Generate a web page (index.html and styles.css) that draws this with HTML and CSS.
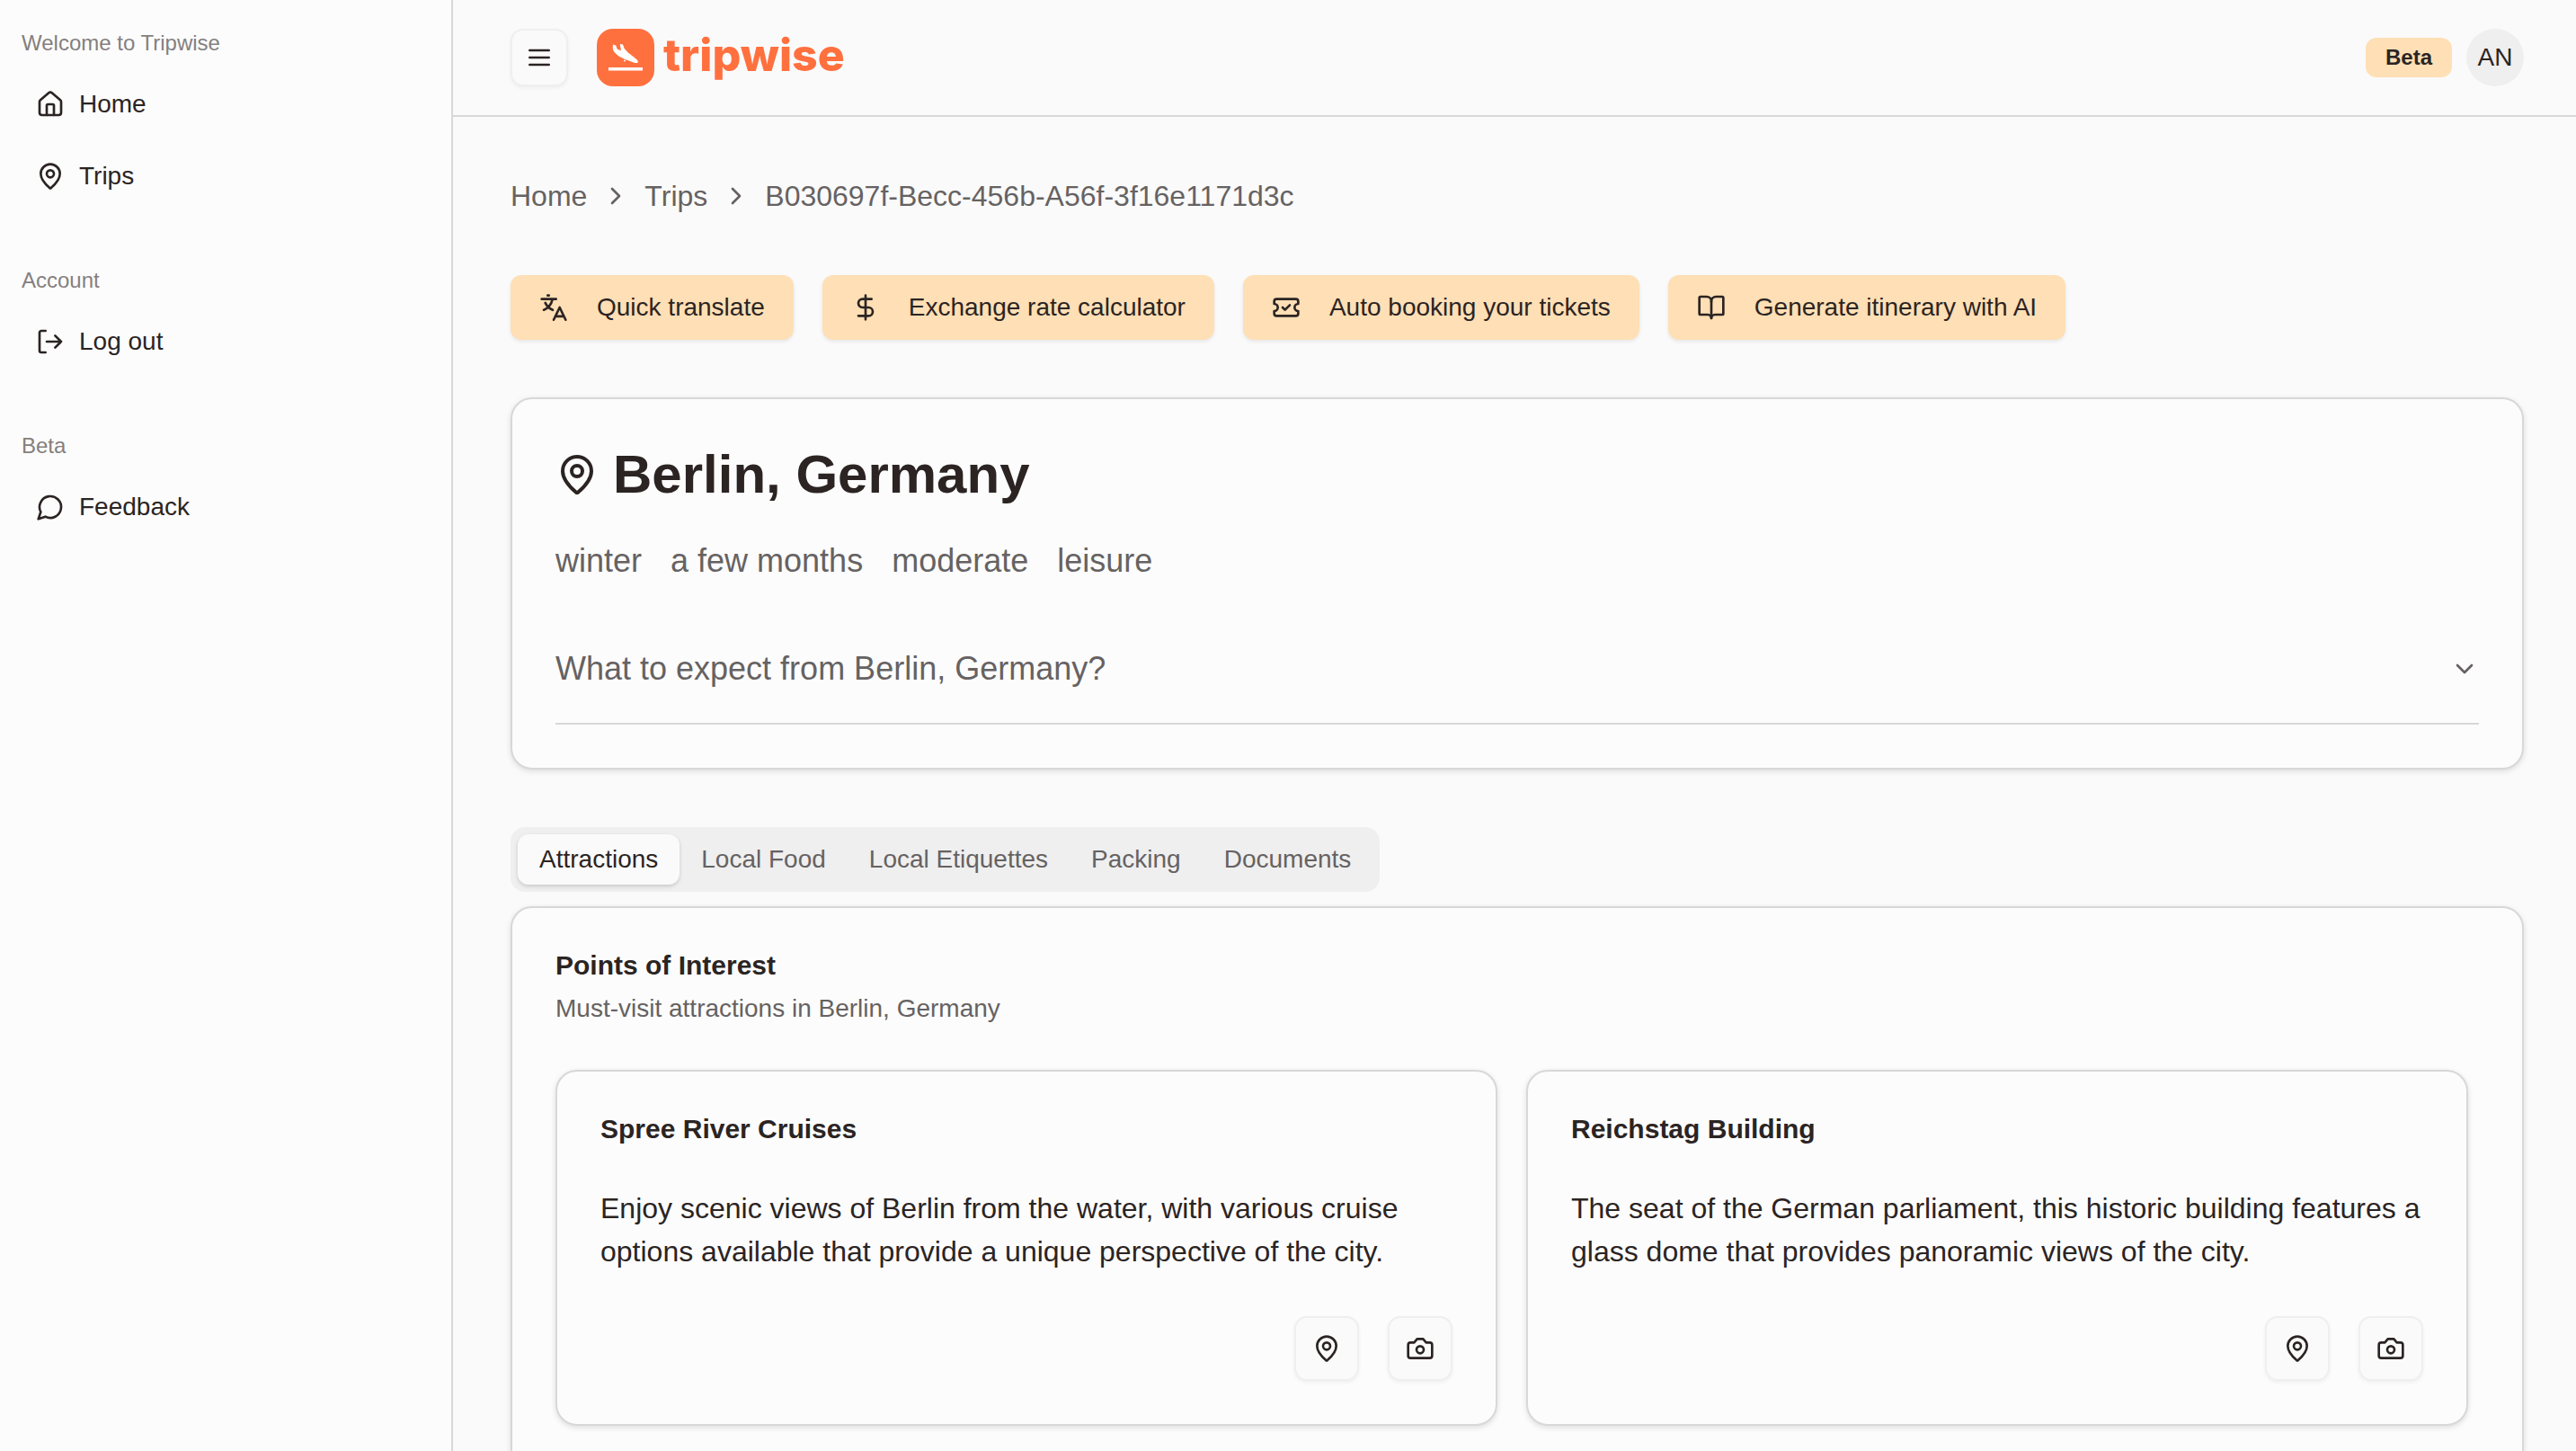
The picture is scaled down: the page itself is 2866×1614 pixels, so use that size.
FILE: index.html
```html
<!DOCTYPE html>
<html lang="en">
<head>
<meta charset="utf-8">
<meta name="viewport" content="width=device-width, initial-scale=1">
<title>Berlin, Germany - tripwise</title>
<link rel="stylesheet" href="styles.css">
</head>
<body>
<svg class="sprite" aria-hidden="true">
  <symbol id="i-home" viewBox="0 0 24 24"><path d="M15 21v-8a1 1 0 0 0-1-1h-4a1 1 0 0 0-1 1v8"/><path d="M3 10a2 2 0 0 1 .709-1.528l7-5.999a2 2 0 0 1 2.582 0l7 5.999A2 2 0 0 1 21 10v9a2 2 0 0 1-2 2H5a2 2 0 0 1-2-2z"/></symbol>
  <symbol id="i-pin" viewBox="0 0 24 24"><path d="M20 10c0 4.993-5.539 10.193-7.399 11.799a1 1 0 0 1-1.202 0C9.539 20.193 4 14.993 4 10a8 8 0 0 1 16 0"/><circle cx="12" cy="10" r="3"/></symbol>
  <symbol id="i-exit" viewBox="0 0 24 24"><path d="M8 21H4.500a1.500 1.500 0 0 1-1.500-1.500v-15A1.500 1.500 0 0 1 4.500 3H8"/><path d="M16 17l5-5-5-5M21 12H9"/></symbol>
  <symbol id="i-chat" viewBox="0 0 24 24"><path d="M7.900 20A9 9 0 1 0 4 16.100L2 22Z"/></symbol>
  <symbol id="i-menu" viewBox="0 0 24 24"><path d="M4 6h16M4 12h16M4 18h16"/></symbol>
  <symbol id="i-right" viewBox="0 0 24 24"><path d="m9 18 6-6-6-6"/></symbol>
  <symbol id="i-down" viewBox="0 0 24 24"><path d="m6 9 6 6 6-6"/></symbol>
  <symbol id="i-dollar" viewBox="0 0 24 24"><path d="M12 2v20M17 5H9.500a3.500 3.500 0 0 0 0 7h5a3.500 3.500 0 0 1 0 7H6"/></symbol>
  <symbol id="i-ticket" viewBox="0 0 24 24"><path d="M2 9a3 3 0 0 1 0 6v2a2 2 0 0 0 2 2h16a2 2 0 0 0 2-2v-2a3 3 0 0 1 0-6V7a2 2 0 0 0-2-2H4a2 2 0 0 0-2 2Z"/><path d="m9 12 2 2 4-4"/></symbol>
  <symbol id="i-book" viewBox="0 0 24 24"><path d="M12 7v14"/><path d="M3 18a1 1 0 0 1-1-1V4a1 1 0 0 1 1-1h5a4 4 0 0 1 4 4 4 4 0 0 1 4-4h5a1 1 0 0 1 1 1v13a1 1 0 0 1-1 1h-6a3 3 0 0 0-3 3 3 3 0 0 0-3-3z"/></symbol>
  <symbol id="i-camera" viewBox="0 0 24 24"><path d="M14.500 4h-5L7 7H4a2 2 0 0 0-2 2v9a2 2 0 0 0 2 2h16a2 2 0 0 0 2-2V9a2 2 0 0 0-2-2h-3l-2.500-3z"/><circle cx="12" cy="13" r="3"/></symbol>
  <symbol id="i-translate" viewBox="0 0 24 24"><path d="M7 2h1M2 5h12M11 5.200C10 9.500 7.500 12.500 3.800 14M5 8.200c1.200 2.600 3.200 4.600 6.200 5.900M12 22.300l5-10.300 5 10.300M13.400 19.400h7.200"/></symbol>
</svg>

<div class="app">
  <aside class="sidebar">
    <nav class="group" aria-labelledby="g1">
      <h2 class="group-label" id="g1">Welcome to Tripwise</h2>
      <a class="nav-item" href="#"><svg class="icon"><use href="#i-home"/></svg>Home</a>
      <a class="nav-item" href="#"><svg class="icon"><use href="#i-pin"/></svg>Trips</a>
    </nav>
    <nav class="group" aria-labelledby="g2">
      <h2 class="group-label" id="g2">Account</h2>
      <a class="nav-item" href="#"><svg class="icon"><use href="#i-exit"/></svg>Log out</a>
    </nav>
    <nav class="group" aria-labelledby="g3">
      <h2 class="group-label" id="g3">Beta</h2>
      <a class="nav-item" href="#"><svg class="icon"><use href="#i-chat"/></svg>Feedback</a>
    </nav>
  </aside>

  <div class="main">
    <header class="topbar">
      <button class="icon-btn menu-btn" type="button" aria-label="Toggle sidebar"><svg class="icon"><use href="#i-menu"/></svg></button>
      <a class="brand" href="#">
        <svg class="brand-mark" viewBox="0 0 64 64"><rect width="64" height="64" rx="18" fill="#ff703f"/><path fill="#fff" d="M13 43h38v3.500H13zM18 17.500l3.200 1 1.600 4.200 4.200 1.600-1-5.600V17l3 .6 1.800 4.600 4 4.300 5.500 4.300 4.500 3.600c1 1 1.200 2.200.8 3.300-1.600.6-3 .3-4.600-.3L31 33.800l-5.700-2.800c-3-2-5.500-4.400-7-7-.6-2-.6-4.200-.3-6.500z"/><circle cx="31" cy="35.500" r="1" fill="#fff"/></svg>
        <span class="brand-name">tripwise</span>
      </a>
      <span class="badge">Beta</span>
      <button class="avatar" type="button" aria-label="Account AN">AN</button>
    </header>

    <main class="content">
      <nav class="crumbs" aria-label="Breadcrumb">
        <a href="#">Home</a><svg class="icon"><use href="#i-right"/></svg>
        <a href="#">Trips</a><svg class="icon"><use href="#i-right"/></svg>
        <a href="#">B030697f-Becc-456b-A56f-3f16e1171d3c</a>
      </nav>

      <div class="actions">
        <button class="action" type="button"><svg class="icon"><use href="#i-translate"/></svg>Quick translate</button>
        <button class="action" type="button"><svg class="icon"><use href="#i-dollar"/></svg>Exchange rate calculator</button>
        <button class="action" type="button"><svg class="icon"><use href="#i-ticket"/></svg>Auto booking your tickets</button>
        <button class="action" type="button"><svg class="icon"><use href="#i-book"/></svg>Generate itinerary with AI</button>
      </div>

      <section class="card trip">
        <h1 class="trip-title"><svg class="icon icon-lg"><use href="#i-pin"/></svg>Berlin, Germany</h1>
        <ul class="tags"><li>winter</li><li>a few months</li><li>moderate</li><li>leisure</li></ul>
        <button class="accordion" type="button" aria-expanded="false">What to expect from Berlin, Germany?<svg class="icon"><use href="#i-down"/></svg></button>
      </section>

      <div class="tabs" role="tablist">
        <button class="tab active" type="button" role="tab" aria-selected="true">Attractions</button>
        <button class="tab" type="button" role="tab" aria-selected="false">Local Food</button>
        <button class="tab" type="button" role="tab" aria-selected="false">Local Etiquettes</button>
        <button class="tab" type="button" role="tab" aria-selected="false">Packing</button>
        <button class="tab" type="button" role="tab" aria-selected="false">Documents</button>
      </div>

      <section class="card places">
        <h2 class="heading">Points of Interest</h2>
        <p class="sub">Must-visit attractions in Berlin, Germany</p>
        <div class="grid">
          <article class="card place">
            <h3 class="heading">Spree River Cruises</h3>
            <p class="text">Enjoy scenic views of Berlin from the water, with various cruise options available that provide a unique perspective of the city.</p>
            <div class="place-actions">
              <button class="icon-btn" type="button" aria-label="Show on map"><svg class="icon"><use href="#i-pin"/></svg></button>
              <button class="icon-btn" type="button" aria-label="Show photos"><svg class="icon"><use href="#i-camera"/></svg></button>
            </div>
          </article>
          <article class="card place">
            <h3 class="heading">Reichstag Building</h3>
            <p class="text">The seat of the German parliament, this historic building features a glass dome that provides panoramic views of the city.</p>
            <div class="place-actions">
              <button class="icon-btn" type="button" aria-label="Show on map"><svg class="icon"><use href="#i-pin"/></svg></button>
              <button class="icon-btn" type="button" aria-label="Show photos"><svg class="icon"><use href="#i-camera"/></svg></button>
            </div>
          </article>
        </div>
      </section>
    </main>
  </div>
</div>
</body>
</html>
```
FILE: styles.css
```css
:root {
  --bg: #fafafa;
  --surface: #fcfcfc;
  --border: #d8d8d8;
  --soft: #efefef;
  --text: #2b2423;
  --muted: #666262;
  --peach: #ffdfb5;
  --orange: #ff703f;
}

* { box-sizing: border-box; margin: 0; padding: 0; }

html, body { height: 100%; }

body {
  background: var(--bg);
  color: var(--text);
  font: 28px/40px "Liberation Sans", Arial, sans-serif;
}

button { font: inherit; color: inherit; border: 0; background: none; }
a { color: inherit; text-decoration: none; }
ul { list-style: none; }

.sprite { position: absolute; width: 0; height: 0; }

.icon {
  flex: none;
  width: 32px;
  height: 32px;
  fill: none;
  stroke: currentColor;
  stroke-width: 2;
  stroke-linecap: round;
  stroke-linejoin: round;
}
.icon-lg { width: 48px; height: 48px; }

/* The window holds still; the page content scrolls under the top bar */
.app { display: flex; height: 100%; overflow: hidden; }

/* Sidebar */
.sidebar {
  flex: none;
  display: flex;
  flex-direction: column;
  gap: 16px;
  width: 504px;
  background: var(--surface);
  border-right: 2px solid var(--border);
}
.group { display: flex; flex-direction: column; padding: 16px 24px; }
.group-label { font-size: 24px; font-weight: 400; line-height: 64px; color: #857f7e; }
.nav-item { display: flex; align-items: center; gap: 16px; height: 72px; padding: 0 16px; }
.nav-item + .nav-item { margin-top: 8px; }

/* Top bar */
.main { flex: 1; min-width: 0; display: flex; flex-direction: column; }
.topbar {
  flex: none;
  display: flex;
  align-items: center;
  gap: 16px;
  height: 130px;
  padding: 0 58px 0 64px;
  border-bottom: 2px solid var(--border);
}
.icon-btn {
  display: flex;
  align-items: center;
  justify-content: center;
  width: 72px;
  height: 72px;
  background: var(--bg);
  border: 2px solid var(--soft);
  border-radius: 14px;
  box-shadow: 0 2px 4px rgb(0 0 0 / 5%);
}
.menu-btn { width: 64px; height: 64px; }
.brand { display: flex; gap: 10px; margin: 0 auto 0 16px; }
.brand-mark { width: 64px; height: 64px; }
.brand-name { font: 800 50px/58px Inter, sans-serif; color: var(--orange); }
.badge {
  padding: 0 22px;
  border-radius: 12px;
  background: var(--peach);
  font-size: 24px;
  font-weight: 700;
  line-height: 44px;
}
.avatar { width: 64px; height: 64px; border-radius: 50%; background: var(--soft); }

/* Page content */
.content {
  flex: 1;
  min-height: 0;
  overflow-y: auto;
  scrollbar-width: none;
  padding: 64px 58px 64px 64px;
}
.crumbs { display: flex; align-items: center; gap: 16px; font-size: 32px; line-height: 48px; color: var(--muted); }
.actions { display: flex; flex-wrap: wrap; gap: 32px; margin: 64px 0; }
.action {
  display: flex;
  align-items: center;
  gap: 32px;
  height: 72px;
  padding: 0 32px;
  border-radius: 12px;
  background: var(--peach);
  box-shadow: 0 2px 4px rgb(0 0 0 / 8%);
}
.card {
  padding: 48px;
  background: var(--surface);
  border: 2px solid var(--border);
  border-radius: 24px;
  box-shadow: 0 2px 6px rgb(0 0 0 / 12%);
}

.trip-title { display: flex; align-items: center; gap: 16px; font-size: 60px; line-height: 72px; }
.tags { display: flex; gap: 32px; margin: 32px 0; font-size: 36px; line-height: 56px; color: var(--muted); }
.accordion {
  display: flex;
  align-items: center;
  justify-content: space-between;
  width: 100%;
  padding: 32px 0;
  border-bottom: 2px solid var(--border);
  font-size: 36px;
  line-height: 56px;
  color: var(--muted);
  text-align: left;
}

.tabs {
  display: flex;
  width: fit-content;
  margin: 64px 0 16px;
  padding: 8px;
  border-radius: 16px;
  background: var(--soft);
}
.tab { padding: 0 24px; border-radius: 12px; line-height: 56px; color: var(--muted); }
.tab.active { background: var(--bg); color: var(--text); box-shadow: 0 2px 4px rgb(0 0 0 / 16%); }

.heading { font-size: 30px; line-height: 32px; }
.sub { margin: 12px 0 48px; color: var(--muted); }
.grid { display: grid; grid-template-columns: 1fr 1fr; gap: 32px; padding-right: 12px; }
.text { margin: 48px 0; font-size: 32px; line-height: 48px; }
.place-actions { display: flex; justify-content: flex-end; gap: 32px; }
```
